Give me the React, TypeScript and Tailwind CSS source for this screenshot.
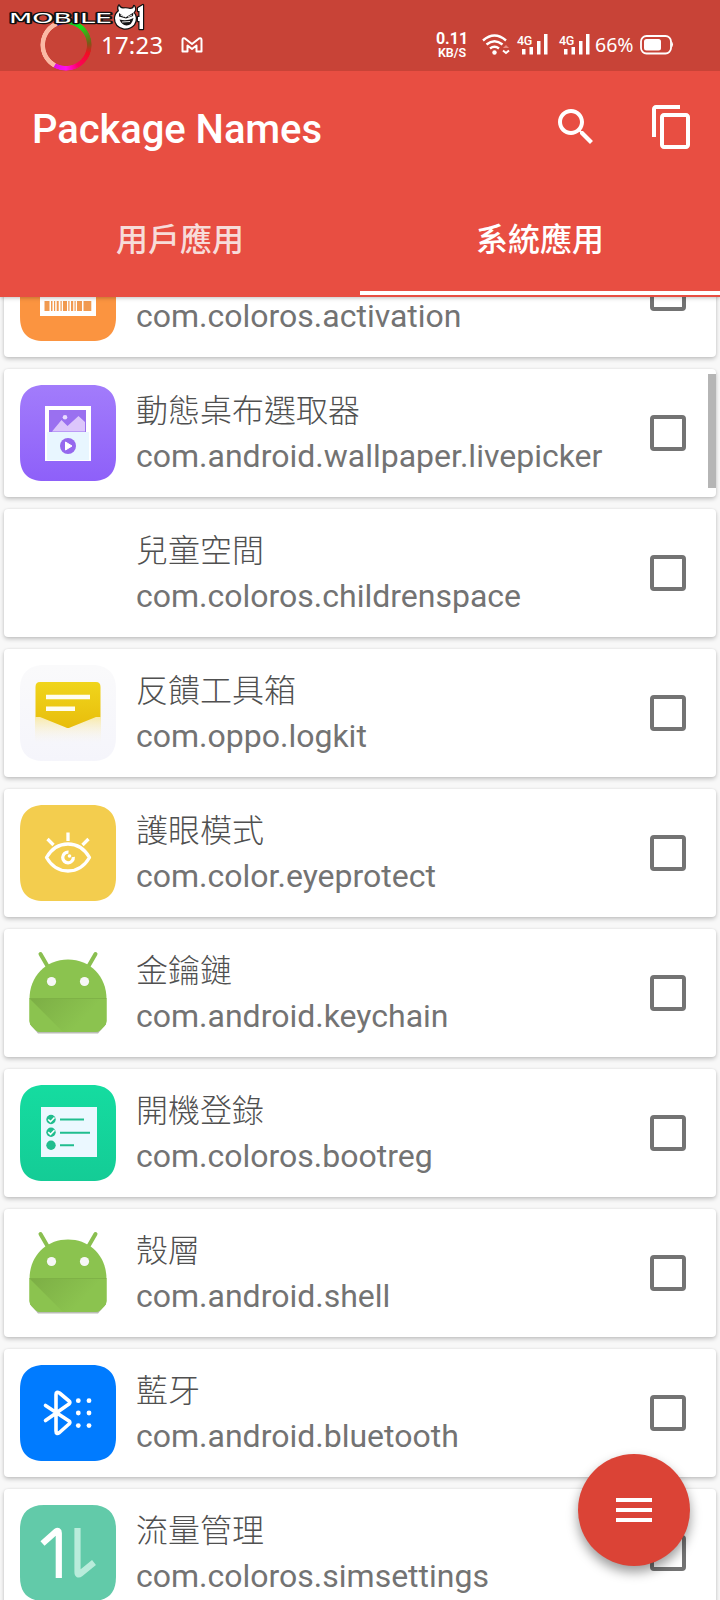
import React from "react";

type Row = { name: string; pkg: string; icon: React.ReactNode };

const Tile = ({ fill, children }: { fill: string; children?: React.ReactNode }) => (
  <svg viewBox="0 0 96 96" className="size-24">
    <defs>
      <linearGradient id="purple" x1="0" y1="0" x2="0" y2="1">
        <stop offset="0" stopColor="#a27cfb" />
        <stop offset="1" stopColor="#8e60f9" />
      </linearGradient>
      <linearGradient id="green" x1="0" y1="0" x2="0" y2="1">
        <stop offset="0" stopColor="#15dca0" />
        <stop offset="1" stopColor="#14cc96" />
      </linearGradient>
      <linearGradient id="pale" x1="0" y1="0" x2="0" y2="1">
        <stop offset="0" stopColor="#fafafb" />
        <stop offset="1" stopColor="#f5f5fb" />
      </linearGradient>
      <linearGradient id="gold" x1="0" y1="0" x2="0" y2="1">
        <stop offset="0" stopColor="#f0d51c" />
        <stop offset="1" stopColor="#e8bd0c" />
      </linearGradient>
      <linearGradient id="haze" x1="0" y1="0" x2="0" y2="1">
        <stop offset="0" stopColor="#f9eaa8" />
        <stop offset="1" stopColor="#f7f6fb" stopOpacity="0" />
      </linearGradient>
    </defs>
    <path
      d="M24 0H72C88 0 96 9 96 24V72C96 88 88 96 72 96H24C8 96 0 88 0 72V24C0 9 8 0 24 0Z"
      fill={fill}
    />
    {children}
  </svg>
);

const Activation = () => (
  <Tile fill="#fb9440">
    <path d="M20 24H76V71H20Z" fill="#fff" />
    <path
      d="M24.5 56h5v10h-5zM31 56h1.5v10H31zM34 56h1.2v10H34zM36.7 56h2v10h-2zM40.5 56h1.2v10h-1.2zM43 56h4v10h-4zM48.3 56h1.2v10h-1.2zM51 56h2.2v10H51zM54.5 56h1.2v10h-1.2zM57 56h5v10h-5zM63.5 56h7.8v10h-7.8z"
      fill="#f19a50"
    />
  </Tile>
);

const LivePicker = () => (
  <Tile fill="url(#purple)">
    <path d="M25 21H71V76H25Z" fill="#fff" />
    <path d="M27 47H69V75H27Z" fill="#e8f6ff" />
    <path d="M29 25H66V47H29Z" fill="#9a70f0" />
    <circle cx="45" cy="32.3" r="2.3" fill="#e9dcff" />
    <path d="M32 46.500L41.500 35L47.500 41L58.500 31L65 37V46.500Z" fill="#dcc6fb" />
    <circle cx="48" cy="61" r="8" fill="#9568ee" />
    <path d="M45.500 57V65L52 61Z" fill="#fff" stroke="#fff" strokeLinejoin="round" />
  </Tile>
);

const Logkit = () => (
  <Tile fill="url(#pale)">
    <path d="M15 52H81V80H15Z" fill="url(#haze)" />
    <path d="M20 17H76Q80.500 17 80.500 22V52H76L50 62.500Q48 63.500 46 62.500L20 52H15.500V22Q15.500 17 20 17Z" fill="url(#gold)" />
    <path d="M26 32H70M26 43.700H55" stroke="#fffdf0" strokeWidth="4.500" />
  </Tile>
);

const Eye = () => (
  <Tile fill="#f3cd4e">
    <g fill="none" stroke="#fff" strokeWidth="3.300">
      <path d="M26.500 52.500C37 34.500 59 34.500 69.500 52.500C59 70.500 37 70.500 26.500 52.500Z" strokeLinejoin="round" />
      <path d="M48 27.500V36M27.500 34L33.500 40M68.500 34L62.500 40" />
      <path d="M48.500 47.200A5.300 5.300 0 1 0 53.300 52" />
    </g>
    <circle cx="49.500" cy="51" r="1.800" fill="#fff" />
  </Tile>
);

const Android = () => (
  <svg viewBox="0 0 96 96" className="size-24">
    <defs>
      <linearGradient id="fold" gradientUnits="userSpaceOnUse" x1="10" y1="54" x2="48" y2="90">
        <stop offset="0" stopColor="#7cae45" />
        <stop offset="1" stopColor="#8bc34f" />
      </linearGradient>
    </defs>
    <path d="M20.500 9L28 22M75.500 9L68 22" stroke="#8abf50" strokeWidth="4" strokeLinecap="round" />
    <path d="M10 79L18 88.500H78L86 79Z" fill="#b9bcb5" />
    <path d="M9.500 54C9.500 31 26 14.500 48 14.500S86.500 31 86.500 54V76Q86.500 79 84.500 81L80.500 85Q78.500 87 75.500 87H20.500Q17.500 87 15.500 85L11.500 81Q9.500 79 9.500 76Z" fill="#8bc34f" />
    <path d="M9.500 53.500L43 87H20.500Q17.500 87 15.500 85L11.500 81Q9.500 79 9.500 76Z" fill="#8bc34f" />
    <path d="M9.500 53.500L43 87H75.500Q78.500 87 80.500 85L84.500 81Q86.500 79 86.500 76V53.500Z" fill="url(#fold)" />
    <path d="M9.500 53.500H86.500" stroke="#7cae45" strokeWidth="0.800" />
    <circle cx="31.500" cy="36.500" r="4.600" fill="#f7f7f7" />
    <circle cx="64.500" cy="36.500" r="4.600" fill="#f7f7f7" />
  </svg>
);

const BootReg = () => (
  <Tile fill="url(#green)">
    <path d="M21 22H77V72H21Z" fill="#ebf8ff" />
    <g fill="#20bd8e">
      <circle cx="31" cy="34.500" r="4.700" />
      <circle cx="31" cy="47.200" r="4.700" />
      <circle cx="31" cy="60.300" r="4.700" />
    </g>
    <path d="M28.200 34.500L30.500 36.700L34.500 32.500M28.200 47.200L30.500 49.400L34.500 45.200" fill="none" stroke="#fff" strokeWidth="1.600" />
    <path d="M40 34.500H64M40 47.700H70M40 60.300H54" stroke="#20bd8e" strokeWidth="2" />
  </Tile>
);

const Bluetooth = () => (
  <Tile fill="#007bff">
    <path
      d="M25.500 40.500L49 56Q50.800 57.500 49 59L39.500 67.500Q36 70 36 66V29.500Q36 26 39.500 28L49 36Q50.800 37.500 49 39L25.500 55.500"
      fill="none"
      stroke="#fff"
      strokeWidth="3.600"
      strokeLinecap="round"
      strokeLinejoin="round"
    />
    <g fill="#fff">
      <circle cx="58.300" cy="35.700" r="2.400" />
      <circle cx="69" cy="35.700" r="2.400" />
      <circle cx="58.300" cy="48" r="2.400" />
      <circle cx="69" cy="48" r="2.400" />
      <circle cx="58.300" cy="60.600" r="2.400" />
      <circle cx="69" cy="60.600" r="2.400" />
    </g>
  </Tile>
);

const SimSettings = () => (
  <Tile fill="#62caa9">
    <path d="M22.500 38.500L36 26.500Q38.800 24.500 38.800 28V73" fill="none" stroke="#fff" strokeWidth="6.200" strokeLinejoin="round" />
    <path d="M57.500 23V67Q57.500 71 60.500 68.500L74 57.500" fill="none" stroke="#b9ecdb" strokeWidth="6.200" strokeLinejoin="round" />
  </Tile>
);

const rows: Row[] = [
  { name: "", pkg: "com.coloros.activation", icon: <Activation /> },
  { name: "動態桌布選取器", pkg: "com.android.wallpaper.livepicker", icon: <LivePicker /> },
  { name: "兒童空間", pkg: "com.coloros.childrenspace", icon: null },
  { name: "反饋工具箱", pkg: "com.oppo.logkit", icon: <Logkit /> },
  { name: "護眼模式", pkg: "com.color.eyeprotect", icon: <Eye /> },
  { name: "金鑰鏈", pkg: "com.android.keychain", icon: <Android /> },
  { name: "開機登錄", pkg: "com.coloros.bootreg", icon: <BootReg /> },
  { name: "殼層", pkg: "com.android.shell", icon: <Android /> },
  { name: "藍牙", pkg: "com.android.bluetooth", icon: <Bluetooth /> },
  { name: "流量管理", pkg: "com.coloros.simsettings", icon: <SimSettings /> },
];

const Card = ({ row }: { row: Row }) => (
  <li className="flex h-32 shrink-0 items-center rounded-[4px] bg-white pr-[30px] pl-4 shadow-[0_2px_4px_rgba(0,0,0,0.22),0_0_2px_rgba(0,0,0,0.08)]">
    <div className="size-24 shrink-0">{row.icon}</div>
    <div className="ml-5 flex-1 text-[32px] whitespace-nowrap text-[#737373]">
      <p className="h-[46px] pb-[4px] font-['Noto_Sans_CJK_TC',sans-serif] leading-[42px] font-light text-[#505050]">{row.name}</p>
      <p className="h-[46px] leading-[46px]">{row.pkg}</p>
    </div>
    <div className="size-9 shrink-0 rounded-[4px] border-4 border-[#737373]" />
  </li>
);

const Signal = () => (
  <div className="relative h-[22px] w-[30px]">
    <svg viewBox="0 0 30 22" className="h-[22px] w-[30px]">
      <path d="M4 15h3.500v5.500H4zM11.500 13h3.500v7.500h-3.500zM19 7h3.500v13.500H19zM26 0h3.500v20.500H26z" fill="#fff" />
    </svg>
    <span className="absolute top-[-1px] left-[-1px] text-[12.500px] leading-[15px] font-medium tracking-[-0.300px]">4G</span>
  </div>
);

const Watermark = () => (
  <svg viewBox="0 0 150 34" className="absolute top-0 left-0 h-[34px] w-[150px]">
    <g fill="#fff" stroke="#111" strokeWidth="2.400" strokeLinejoin="round" style={{ paintOrder: "stroke" }}>
      <text x="9" y="23" fontSize="13.500" fontFamily="'DejaVu Sans'" textLength="103" lengthAdjust="spacingAndGlyphs">MOBILE</text>
      <path d="M119 5.500Q119.500 8 123 8.500Q127 8 130 9Q134 9 134 6Q136.500 9.500 133.500 12.500Q138 18 134 24.500Q130 29 124 28.500Q115 26.500 115 18Q115.500 13.500 119 11Q117.500 8 119 5.500Z" />
      <path d="M138 8L143 5V29H139.500V21H138V17H139.500V11H138Z" />
    </g>
    <path d="M119 13L125.500 17.500L133.500 12.500L133 16L126 18.500L119 16.500ZM119.500 19.500Q127 21.500 133.500 18Q132 25.500 126.500 25.500Q121.500 25 119.500 19.500Z" fill="#151515" />
    <path d="M120.500 15L124 16.500M128 17L132 15M122 22L130 21.500" stroke="#fff" strokeWidth="0.900" />
  </svg>
);

export default function App() {
  return (
    <div className="relative flex h-[1600px] w-[720px] flex-col overflow-hidden bg-[#f8f8f8] font-['Roboto','Noto_Sans_CJK_TC',sans-serif]">
      <header className="relative z-10 flex h-[297px] shrink-0 flex-col bg-[#e84e42] shadow-[0_1px_4px_rgba(0,0,0,0.25)]">
        <div className="flex h-[71px] items-center bg-[#c84337] pt-[19px] pl-[40px] text-white">
          <div className="size-[52px] shrink-0 rounded-full bg-[conic-gradient(#0bbf2b_0deg,#16e016_40deg,#7a5a18_85deg,#f01020_110deg,#ff0060_150deg,#ff10f0_180deg,#e010e0_208deg,#fbb9a4_210deg,#fbb9a4_335deg,#1010a0_338deg,#3a2090_350deg,#0bbf2b_360deg)] [mask:radial-gradient(closest-side,transparent_79%,#000_82%,#000_97%,transparent_100%)]" />
          <span className="ml-[9px] w-[62px] font-['Noto_Sans',sans-serif] text-[24px] leading-[32px] tracking-[0.2px]">17:23</span>
          <svg viewBox="0 0 22 16" className="ml-[18px] h-4 w-[22px]">
            <path d="M1.500 14.500V3Q1.500 0.500 4 1.500L11 7L18 1.500Q20.500 0.500 20.500 3V14.500H15.500V8.500L11 12L6.500 8.500V14.500Z" fill="none" stroke="#fff" strokeWidth="2" strokeLinejoin="round" />
          </svg>
          <div className="ml-[230px] flex w-[38px] flex-col items-center pt-px font-bold">
            <span className="text-[16px] leading-[14px]">0.11</span>
            <span className="text-[12.500px] leading-[13px] font-semibold">KB/S</span>
          </div>
          <svg viewBox="0 0 28 22" className="ml-[11px] h-[22px] w-[28px]">
            <g fill="none" stroke="#fff" strokeWidth="2.400">
              <path d="M1 6.500Q12.500 -3.500 24 6.500" />
              <path d="M4.500 10.500Q12.500 3.800 20.500 10.500" />
              <path d="M8 14.500Q12.500 11 17 14.500" />
              <path d="M21 16.500L24 19L27 16.500" strokeWidth="2" />
            </g>
            <path d="M21 14L24 11L27 14Z" fill="#e98c82" />
            <circle cx="12.500" cy="18.500" r="2.200" fill="#fff" />
          </svg>
          <div className="ml-[8px] flex gap-[12px]">
            <Signal />
            <Signal />
          </div>
          <span className="ml-[5px] w-[40px] font-['Noto_Sans',sans-serif] text-[19.500px] leading-[24px] whitespace-nowrap">66%</span>
          <svg viewBox="0 0 34 20" className="ml-[5px] h-5 w-[34px]">
            <rect x="1" y="1" width="30" height="17.500" rx="5.500" fill="none" stroke="#fff" strokeWidth="1.800" />
            <rect x="4" y="4" width="17" height="11.500" rx="2.500" fill="#fff" />
            <path d="M31.500 6Q34.500 9.500 31.500 13Z" fill="#fff" />
          </svg>
        </div>
        <div className="flex h-[113px] items-center pr-[30px] pl-[32px] text-white">
          <h1 className="flex-1 pt-[4px] text-[40px] leading-[48px] font-medium tracking-[-0.080px]">Package Names</h1>
          <svg viewBox="0 0 24 24" className="mr-[52px] mb-[2px] size-12" fill="#fff">
            <path d="M15.500 14h-.79l-.28-.27C15.410 12.590 16 11.110 16 9.500 16 5.910 13.090 3 9.500 3S3 5.910 3 9.500 5.910 16 9.500 16c1.610 0 3.090-.59 4.230-1.570l.27.28v.79l5 4.990L20.490 19l-4.990-5zm-6 0C7.010 14 5 11.990 5 9.500S7.010 5 9.500 5 14 7.010 14 9.500 11.990 14 9.500 14z" />
          </svg>
          <svg viewBox="2 1 19 22" className="mb-[2px] h-[44px] w-[38px]" fill="#fff">
            <path d="M16 1H4c-1.100 0-2 .9-2 2v14h2V3h12V1zm3 4H8c-1.100 0-2 .9-2 2v14c0 1.100.9 2 2 2h11c1.100 0 2-.9 2-2V7c0-1.100-.9-2-2-2zm0 16H8V7h11v14z" />
          </svg>
        </div>
        <nav className="grid h-[111px] grid-cols-2 text-center font-['Noto_Sans_CJK_TC',sans-serif] text-[32px] leading-[48px] font-medium">
          <div className="pt-[29px] text-[#f7dcd9]">用戶應用</div>
          <div className="border-b-4 border-white pt-[29px] text-white">系統應用</div>
        </nav>
        <Watermark />
      </header>
      <ul className="-mt-[68px] flex flex-col gap-3 px-1">
        {rows.map((row) => (
          <Card key={row.pkg} row={row} />
        ))}
      </ul>
      <div className="absolute top-[374px] right-[4px] h-[114px] w-[8px] bg-[#b5b5b5]" />
      <button className="absolute top-[1454px] left-[578px] z-20 flex size-28 flex-col items-center justify-center gap-[6px] rounded-full bg-[#db4336] shadow-[0_6px_12px_rgba(0,0,0,0.4)]">
        <span className="h-1 w-9 bg-white" />
        <span className="h-1 w-9 bg-white" />
        <span className="h-1 w-9 bg-white" />
      </button>
    </div>
  );
}
